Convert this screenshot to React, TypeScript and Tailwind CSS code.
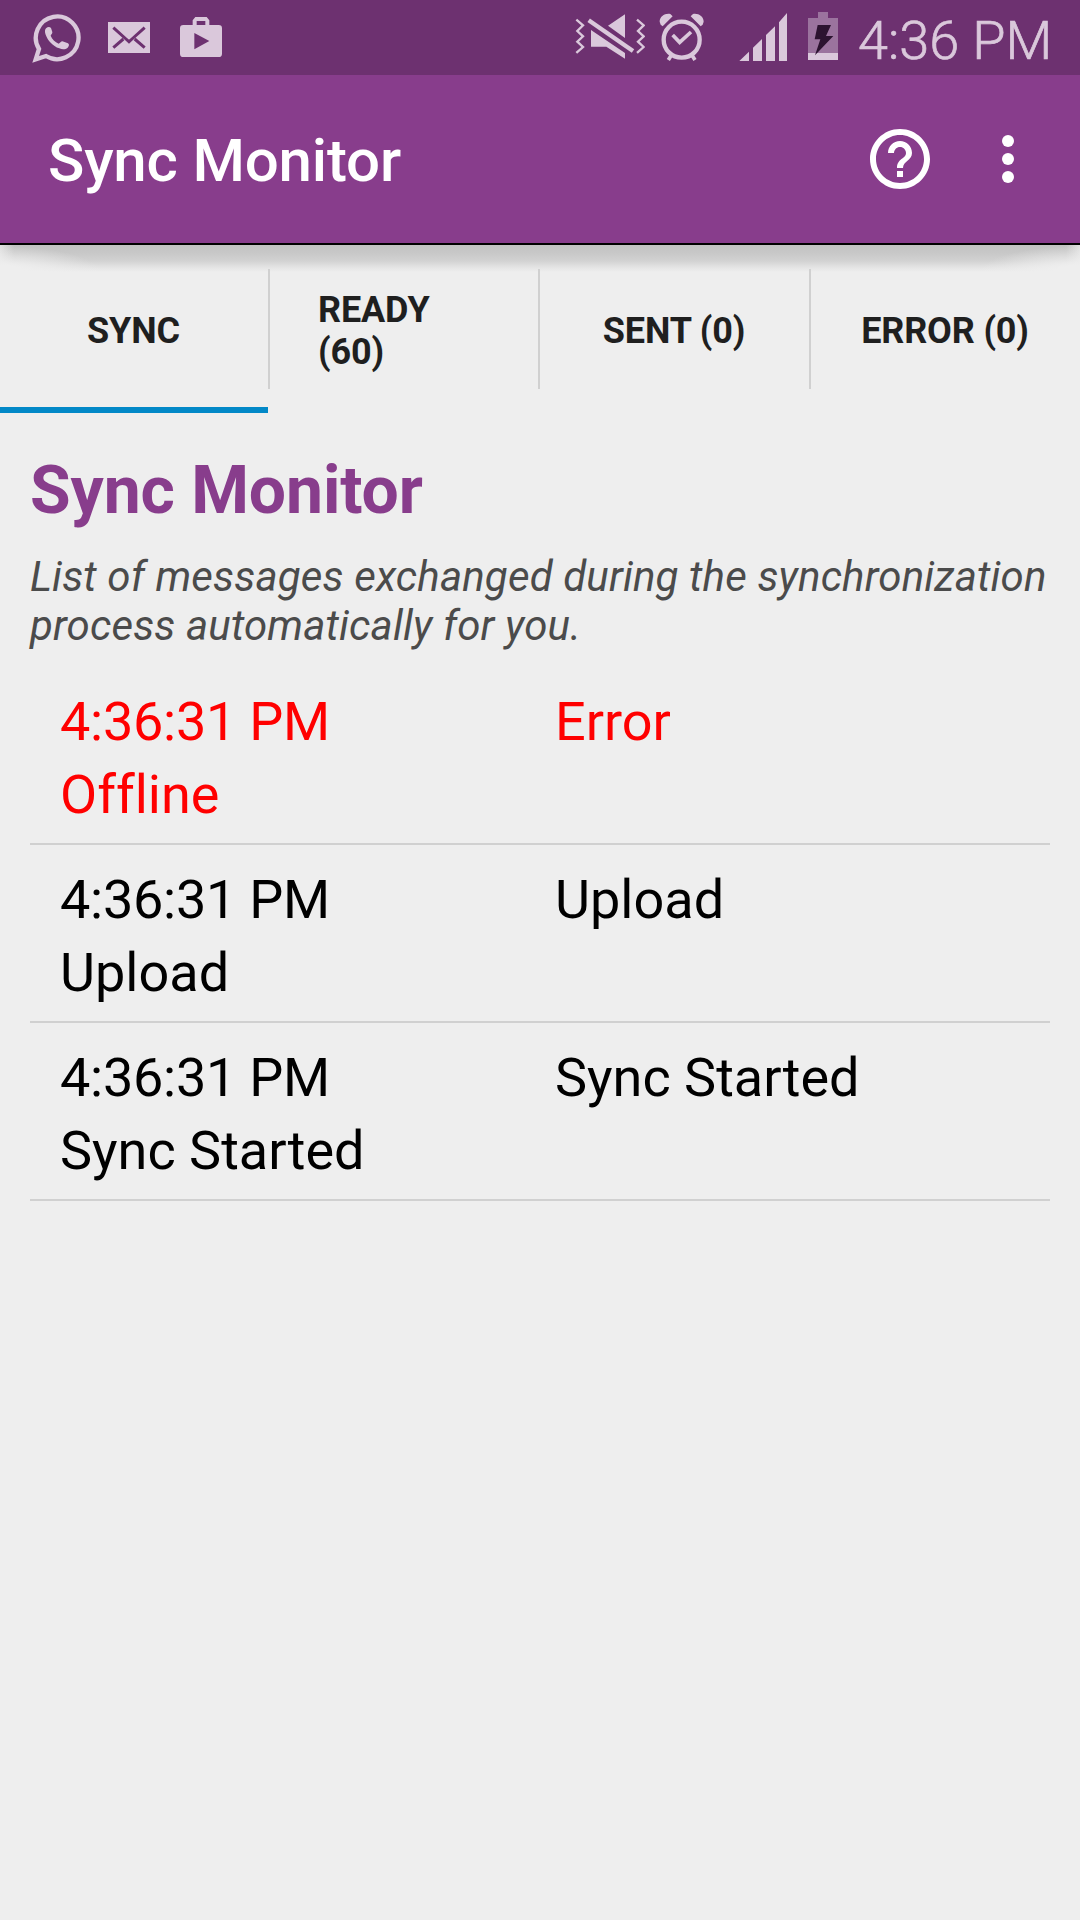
import React from "react";

const INK = "#dac8db";

function WhatsAppIcon() {
  return (
    <svg viewBox="96 36 150 153" className="ml-8 h-[51px] w-[50px]" fill="none">
      <path
        d="M107 178 L117 147 A64 64 0 1 1 138 168 Z"
        stroke={INK}
        strokeWidth="13"
        strokeLinejoin="miter"
      />
      <path
        d="M138 85 C143 80 149 79 153 84 L157 96 C158 100 153 104 152 107 C156 117 165 126 176 131 C180 130 183 124 187 124 L204 130 C209 133 207 139 203 143 C196 149 187 149 178 145 C158 138 143 121 137 104 C134 96 134 90 138 85 Z"
        fill={INK}
      />
    </svg>
  );
}

function MailIcon() {
  return (
    <svg viewBox="0 0 126 93" className="ml-[26px] h-[31px] w-[42px]">
      <rect width="126" height="93" fill={INK} />
      <path
        d="M16 17 L54 51 L63 59 L72 51 L110 17 M16 77 L46 51 M110 77 L80 51"
        stroke="#6d3170"
        strokeWidth="9"
        fill="none"
      />
    </svg>
  );
}

function StoreIcon() {
  return (
    <svg viewBox="0 0 126 120" className="ml-[30px] h-10 w-[42px]">
      <path
        fill={INK}
        fillRule="evenodd"
        d="M10 24 H38 V10 L46 0 H80 L88 10 V24 H116 Q126 24 126 34 V110 Q126 120 116 120 H10 Q0 120 0 110 V34 Q0 24 10 24 Z M50 24 H76 V12 H50 Z M43 48 V97 L88 72 Z"
      />
    </svg>
  );
}

function MuteIcon() {
  return (
    <svg viewBox="45 40 210 140" className="h-[46.67px] w-[70px]">
      <path
        d="M49 60 L69 77 L52 94 L69 110 L52 126 L69 142 L49 160 M231 60 L251 77 L234 94 L251 110 L234 126 L251 142 L231 160"
        fill="none"
        stroke={INK}
        strokeWidth="7"
      />
      <path d="M195 44 V115 L144 78 Z M93 91 L195 160 V177 L139 141 H93 Z" fill={INK} />
      <path d="M86 62 L219 154" stroke={INK} strokeWidth="13" />
    </svg>
  );
}

function AlarmIcon() {
  return (
    <svg viewBox="298 40 136 144" className="ml-[14.33px] h-12 w-[45.33px]" fill="none" stroke={INK}>
      <circle cx="366" cy="120" r="54" strokeWidth="13" />
      <path d="M339 106 L360 128 L394 97" strokeWidth="11" />
      <path d="M334 168 L326 181 M398 168 L406 181" strokeWidth="11" />
      <path
        d="M300 66 C300 50 316 40 332 43 L339 50 L309 80 L303 75 Z M432 66 C432 50 416 40 400 43 L393 50 L423 80 L429 75 Z"
        fill={INK}
        stroke="none"
      />
    </svg>
  );
}

function SignalIcon() {
  return (
    <svg viewBox="537 38 144 145" className="ml-[34.33px] h-[48.33px] w-12" fill={INK}>
      <path d="M537 183 L567 154 V183 Z M579 183 V142 L606 116 V183 Z M618 183 V104 L645 78 V183 Z M657 183 V66 L681 38 V183 Z" />
    </svg>
  );
}

function BatteryIcon() {
  return (
    <svg viewBox="0 0 90 144" className="ml-[21px] h-12 w-[30px]">
      <path d="M0 18 H30 V0 H60 V18 H90 V123 H0 Z" fill="#9b739e" />
      <rect y="123" width="90" height="21" fill={INK} />
      <path d="M29 39 H69 L54 72 H76 L21 130 L37 82 H20 Z" fill="#2c1330" />
    </svg>
  );
}

function HelpIcon() {
  return (
    <svg viewBox="2 2 20 20" className="h-[60px] w-[60px]" fill="#fff">
      <path d="M11 18h2v-2h-2v2zm1-16C6.48 2 2 6.48 2 12s4.48 10 10 10 10-4.48 10-10S17.52 2 12 2zm0 18c-4.41 0-8-3.59-8-8s3.59-8 8-8 8 3.59 8 8-3.59 8-8 8zm0-14c-2.21 0-4 1.79-4 4h2c0-1.1.9-2 2-2s2 .9 2 2c0 2-3 1.75-3 5h2c0-2.25 3-2.5 3-5 0-2.21-1.79-4-4-4z" />
    </svg>
  );
}

const messages = [
  { time: "4:36:31 PM", type: "Error", detail: "Offline", failed: true },
  { time: "4:36:31 PM", type: "Upload", detail: "Upload", failed: false },
  { time: "4:36:31 PM", type: "Sync Started", detail: "Sync Started", failed: false },
];

export default function App() {
  return (
    <div className="flex h-[1920px] w-[1080px] flex-col overflow-hidden bg-[#eeeeee] font-['Roboto',sans-serif] [font-variant-ligatures:none]">
      <div className="flex h-[75px] shrink-0 items-start bg-[#6d3170] text-[#dac8db]">
        <div className="flex items-start">
          <div className="pt-3"><WhatsAppIcon /></div>
          <div className="pt-[22px]"><MailIcon /></div>
          <div className="pt-[17px]"><StoreIcon /></div>
        </div>
        <div className="ml-[353px] flex items-start">
          <div className="pt-[13.33px]"><MuteIcon /></div>
          <div className="pt-[13.33px]"><AlarmIcon /></div>
          <div className="pt-[12.67px]"><SignalIcon /></div>
          <div className="pt-3"><BatteryIcon /></div>
        </div>
        <span className="ml-5 mt-[9px] whitespace-nowrap text-[54px] font-light leading-[63px] [-webkit-text-stroke:0.7px_#dac8db]">4:36 PM</span>
      </div>

      <header className="relative flex h-[170px] shrink-0 items-center border-b-2 border-black bg-[#883d8c] pl-12 pr-[66px] text-white">
        <h1 className="grow pt-1 text-[60px] font-medium leading-[70px] tracking-[-0.18px]">Sync Monitor</h1>
        <div className="flex items-center gap-[72px]">
          <HelpIcon />
          <div className="flex flex-col gap-[6px]">
            <i className="size-3 rounded-full bg-white" />
            <i className="size-3 rounded-full bg-white" />
            <i className="size-3 rounded-full bg-white" />
          </div>
        </div>
        <div className="absolute left-0 top-[170px] flex h-[27px] w-full justify-between bg-[linear-gradient(to_bottom,#c2c2c2_0px,#c8c8c8_8px,#d2d2d2_16px,#e3e3e3_22px,#eeeeee_27px)]">
          <div className="w-[110px] bg-[radial-gradient(ellipse_100px_26px_at_0%_100%,#eeeeee_25%,#eeeeee00_100%),linear-gradient(to_right,#eeeeeeb0,#eeeeee00_14px)]" />
          <div className="w-[110px] bg-[radial-gradient(ellipse_100px_26px_at_100%_100%,#eeeeee_25%,#eeeeee00_100%),linear-gradient(to_left,#eeeeeeb0,#eeeeee00_14px)]" />
        </div>
      </header>

      <nav className="relative flex h-[168px] shrink-0 text-[36px] font-bold leading-[42px] tracking-[-0.15px] text-[#1f1f1f]">
        <div className="flex w-[268px] items-center justify-center border-b-[6px] border-[#0288c7] pr-px pt-[10px]">SYNC</div>
        <div className="mt-6 h-[120px] w-[2px] bg-[#d0d0d0]" />
        <div className="flex w-[268px] items-center px-12 pt-1">READY<br />(60)</div>
        <div className="mt-6 h-[120px] w-[2px] bg-[#d0d0d0]" />
        <div className="flex w-[269px] items-center justify-center pr-px pt-1">SENT (0)</div>
        <div className="mt-6 h-[120px] w-[2px] bg-[#d0d0d0]" />
        <div className="flex w-[269px] items-center justify-center pr-px pt-1">ERROR (0)</div>
      </nav>

      <main className="px-[30px] pt-[39px]">
        <h2 className="text-[66px] font-bold leading-[77px] tracking-[-0.1px] text-[#883d8c]">Sync Monitor</h2>
        <p className="mt-[23px] whitespace-nowrap text-[42px] italic leading-[49px] tracking-[0.15px] text-[#4b4b4b]">
          List of messages exchanged during the synchronization
          <br />
          process automatically for you.
        </p>
        <ul className="mt-[17px]">
          {messages.map((m, i) => (
            <li
              key={i}
              className={`border-b-2 border-[#d0d0d0] px-[30px] pb-3 pt-[18px] text-[54px] leading-[73px] ${m.failed ? "text-[#ff0000]" : "text-black"}`}
            >
              <div className="flex">
                <span className="w-[495px] tracking-[-0.25px]">{m.time}</span>
                <span>{m.type}</span>
              </div>
              <div>{m.detail}</div>
            </li>
          ))}
        </ul>
      </main>
    </div>
  );
}
